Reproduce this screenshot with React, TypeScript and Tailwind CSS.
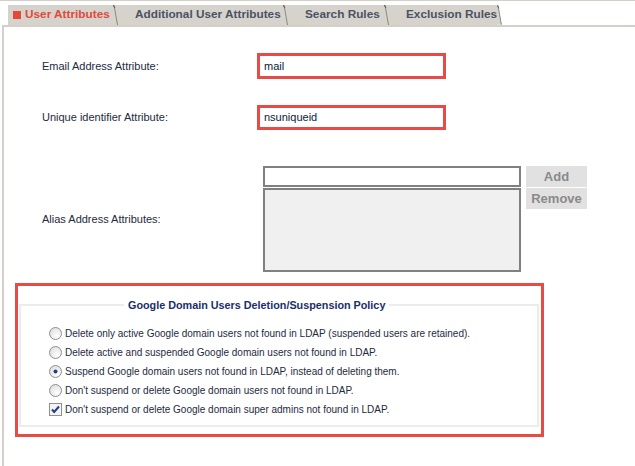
import React from "react";

const tabs = [
  { label: "User Attributes", active: true, w: "w-[110px]" },
  { label: "Additional User Attributes", active: false, w: "w-[170px]" },
  { label: "Search Rules", active: false, w: "w-[101px]" },
  { label: "Exclusion Rules", active: false, w: "w-[113px]" },
];

const options = [
  { kind: "radio", checked: false, text: "Delete only active Google domain users not found in LDAP (suspended users are retained)." },
  { kind: "radio", checked: false, text: "Delete active and suspended Google domain users not found in LDAP." },
  { kind: "radio", checked: true, text: "Suspend Google domain users not found in LDAP, instead of deleting them." },
  { kind: "radio", checked: false, text: "Don't suspend or delete Google domain users not found in LDAP." },
  { kind: "check", checked: true, text: "Don't suspend or delete Google domain super admins not found in LDAP." },
];

function Radio({ checked }: { checked: boolean }) {
  return (
    <svg width="13" height="13" viewBox="0 0 13 13" className="shrink-0">
      <defs>
        <radialGradient id="rg" cx="0.65" cy="0.7" r="0.8">
          <stop offset="0" stopColor="#ffffff" />
          <stop offset="1" stopColor="#dcdcdc" />
        </radialGradient>
      </defs>
      <circle cx="6.5" cy="6.5" r="6" fill="url(#rg)" stroke="#8e8f8f" strokeWidth="1" />
      {checked && <circle cx="6.5" cy="6.5" r="2" fill="#1d3f8a" />}
    </svg>
  );
}

function Check({ checked }: { checked: boolean }) {
  return (
    <svg width="13" height="13" viewBox="0 0 13 13" className="shrink-0">
      <rect x="0.5" y="0.5" width="12" height="12" fill="#f4f4f4" stroke="#8e8f8f" />
      {checked && (
        <path d="M3 6.5 L5.2 9 L10 3.5" fill="none" stroke="#1d3f8a" strokeWidth="2" />
      )}
    </svg>
  );
}

function Tab({ label, active, w, last }: { label: string; active: boolean; w: string; last: boolean }) {
  return (
    <div className={`flex h-[20px] shrink-0 ${w}`}>
      <div className={`flex flex-1 items-center whitespace-nowrap bg-[#d6d3cc] ${active ? "pl-[5px]" : "pl-[17px]"}`}>
        {active ? (
          <span className="flex items-center gap-[4px] text-[11.8px] font-bold text-[#e2493b]">
            <span className="inline-block h-[8px] w-[8px] bg-[#e2493b]" />
            {label}
          </span>
        ) : (
          <span className="text-[11.8px] font-bold text-[#4b5264]">{label}</span>
        )}
      </div>
      <svg width="5" height="20" viewBox="0 0 5 20" className={last ? "bg-white" : "bg-[#d6d3cc]"}>
        <polygon points="0,0 1,0 5,20 0,20" fill="#d6d3cc" />
        <line x1="1" y1="0" x2="4.5" y2="20" stroke="#8a8780" strokeWidth="1" />
        <line x1="0" y1="0" x2="2" y2="3" stroke="#55524c" strokeWidth="1" />
      </svg>
    </div>
  );
}

export default function App() {
  return (
    <div
      className="h-[466px] w-[635px] overflow-hidden border-t border-[#d4d0c8] bg-white"
      style={{ fontFamily: "Tahoma, 'Liberation Sans', Arial, sans-serif" }}
    >
      {/* tab strip */}
      <div className="flex pl-[8px] pt-[4px]" style={{ fontFamily: "'Liberation Sans', Arial, sans-serif" }}>
        {tabs.map((t, i) => (
          <Tab key={t.label} {...t} last={i === tabs.length - 1} />
        ))}
      </div>

      {/* panel */}
      <div className="ml-[2px] h-full border-l-2 border-t-2 border-[#d4d0c8] text-[11px] text-[#1e2a3e]">
        <div className="grid grid-cols-[215px_189px] items-center gap-y-[26px] pl-[38px] pt-[26px]">
          <span>Email Address Attribute:</span>
          <div className="flex h-[26px] items-center border-[3px] border-[#e84a45] pl-[4px] text-[#0a1a40]">mail</div>
          <span>Unique identifier Attribute:</span>
          <div className="flex h-[25px] items-center border-[3px] border-[#e84a45] pl-[4px] text-[#0a1a40]">nsuniqueid</div>
        </div>

        <div className="mt-[36px] flex pl-[38px]">
          <div className="w-[221px] pt-[45px]">Alias Address Attributes:</div>
          <div className="flex flex-col gap-[1px]">
            <div className="h-[21px] w-[258px] border-2 border-[#808080] bg-white" />
            <div className="h-[84px] w-[258px] border-2 border-[#808080] bg-[#f0f0f0]" />
          </div>
          <div className="ml-[5px] flex flex-col gap-[1px]">
            <div className="flex h-[21px] w-[61px] items-center justify-center bg-[#e1e1e1] text-[13px] font-bold text-[#8a8a8a]">Add</div>
            <div className="flex h-[21px] w-[61px] items-center justify-center bg-[#e1e1e1] text-[13px] font-bold text-[#8a8a8a]">Remove</div>
          </div>
        </div>

        <div className="ml-[11px] mt-[11px] h-[154px] w-[529px] border-[3px] border-[#e84a45] px-[1px] pt-[11px]">
          <fieldset className="h-[130px] w-[520px] border-2 border-[#ececec] pl-[28px] pr-[4px]">
            <legend className="ml-[75px] px-[4px] text-[10.8px] font-bold text-[#1a2f6b]">
              Google Domain Users Deletion/Suspension Policy
            </legend>
            <div className="mt-[14px] flex flex-col gap-[6px]">
              {options.map((o) => (
                <div key={o.text} className="flex h-[13px] items-center gap-[3px]">
                  {o.kind === "radio" ? <Radio checked={o.checked} /> : <Check checked={o.checked} />}
                  <span className="text-[10px] leading-[13px]">{o.text}</span>
                </div>
              ))}
            </div>
          </fieldset>
        </div>
      </div>
    </div>
  );
}
